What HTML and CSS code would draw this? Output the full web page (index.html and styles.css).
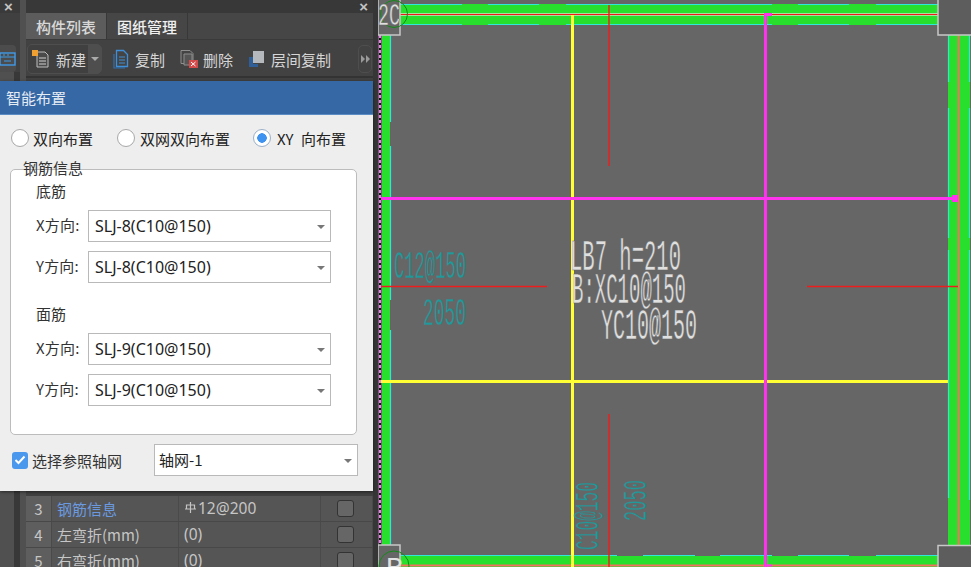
FILE: index.html
```html
<!DOCTYPE html>
<html lang="zh">
<head>
<meta charset="utf-8">
<title>智能布置</title>
<link rel="stylesheet" href="styles.css">
</head>
<body>
<div class="app">
  <div class="panel">
    <div class="side">
      <div class="strip strip-side"><span class="close">×</span></div>
      <div class="side-gap"></div>
      <div class="side-btn">
        <svg width="16" height="14" viewBox="0 0 16 14"><rect x="0" y="1" width="15" height="12" fill="none" stroke="#3f9be8" stroke-width="1.4"/><path d="M0 5h15M3 3h2M7 3h2M4 9h7" stroke="#3f9be8" stroke-width="1.2" fill="none"/></svg>
      </div>
      <div class="side-rest"></div>
    </div>
    <div class="main">
      <div class="strip strip-main"><span class="close">×</span></div>
      <div class="tabs">
        <div class="tab tab-active">构件列表</div>
        <div class="tab">图纸管理</div>
      </div>
      <div class="toolbar">
        <div class="tool-new">
          <span class="tool-new-main">
            <svg width="20" height="20" viewBox="0 0 20 20"><path d="M6 3h8l3 3v12H6z" fill="#4a4a4a" stroke="#bdbdbd"/><path d="M8 9h7M8 12h7M8 15h7" stroke="#d0d0d0"/><rect x="1" y="1" width="6" height="6" fill="#f0a030"/></svg>
            新建
          </span>
          <span class="tool-caret"></span>
        </div>
        <div class="tool tool-copy">
          <svg width="17" height="20" viewBox="0 0 17 20"><path d="M1 5v14h11" fill="none" stroke="#2f6fb0" stroke-width="1.2"/><path d="M3.500 1.500h7l4 4v12h-11z" fill="#444" stroke="#3f8fd8" stroke-width="1.3"/><path d="M6 8h6M6 11h6M6 14h6" stroke="#3f8fd8"/></svg>
          复制
        </div>
        <div class="tool tool-del">
          <svg width="19" height="20" viewBox="0 0 19 20"><path d="M1 1.500h9l3 3v10H1z" fill="#444" stroke="#8e8e8e"/><path d="M4 5h8v11H4z" fill="#555" stroke="#8e8e8e"/><rect x="9" y="11" width="9" height="8" fill="#d24a4a"/><path d="M11 13l4.500 4M15.500 13L11 17" stroke="#fff"/></svg>
          删除
        </div>
        <div class="tool tool-layer">
          <svg width="17" height="18" viewBox="0 0 17 18"><path d="M1 7h4v10H1z" fill="#2f5f96"/><path d="M1 17h9v-3H5V7H1z" fill="#2f5f96"/><rect x="5" y="1" width="11" height="12" fill="#b5b8bd"/></svg>
          层间复制
        </div>
        <div class="tool-more">
          <svg width="9" height="8" viewBox="0 0 9 8"><path d="M0 0l4 4-4 4zM5 0l4 4-4 4z" fill="#9a9a9a"/></svg>
        </div>
      </div>
      <div class="table-gap"></div>
      <div class="prop-table">
        <div class="prop-row">
          <span class="cell-num">3</span><span class="cell-name cell-link">钢筋信息</span>
          <span class="cell-val"><svg class="rebar" width="13" height="13" viewBox="0 0 13 13"><path d="M1 8h11M6.500 1v11M2.500 8V4h8v4" fill="none" stroke="#c4c4c4" stroke-width="1.200"/></svg>12@200</span>
          <span class="cell-chk"><i class="chk"></i></span>
        </div>
        <div class="prop-row">
          <span class="cell-num">4</span><span class="cell-name">左弯折(mm)</span>
          <span class="cell-val">(0)</span>
          <span class="cell-chk"><i class="chk"></i></span>
        </div>
        <div class="prop-row">
          <span class="cell-num">5</span><span class="cell-name">右弯折(mm)</span>
          <span class="cell-val">(0)</span>
          <span class="cell-chk"><i class="chk"></i></span>
        </div>
      </div>
    </div>
  </div>

  <svg class="canvas" width="593" height="567" viewBox="378 0 593 567">
    <rect x="378" y="0" width="593" height="567" fill="#666"/>
    <!-- beams -->
    <rect x="382" y="4" width="589" height="21" fill="#29df2d"/>
    <rect x="381" y="556" width="590" height="11" fill="#29df2d"/>
    <rect x="382" y="0" width="8" height="567" fill="#29df2d"/>
    <rect x="948" y="0" width="22" height="567" fill="#29df2d"/>
    <g class="dash-h" stroke="#2ee8d8">
      <path d="M400 4.500H462M488 4.500H539M566 4.500H772M798 4.500H849M876 4.500H938"/>
      <path d="M400 24.500H462M488 24.500H539M566 24.500H772M798 24.500H849M876 24.500H938"/>
      <path d="M400 555.500H617M643 555.500H695M720 555.500H772M798 555.500H849M876 555.500H938"/>
      <path d="M390.500 35V122M390.500 146V300M390.500 330V545"/>
      <path d="M948.500 35V82M948.500 108V238M948.500 250V470M948.500 420V498"/>
      <path d="M969.500 35V82M969.500 108V238M969.500 250V500"/>
    </g>
    <path d="M378 14.500H971" stroke="#a8e0a0" stroke-width="3"/>
    <path d="M378 14.500H971" stroke="#f01818"/>
    <path d="M958.500 35V567" stroke="#f47060" stroke-width="2"/>
    <path d="M380 565.500H971" stroke="#f47060" stroke-width="2"/>
    <!-- layout lines -->
    <path d="M381 381.500H948" stroke="#ffff33" stroke-width="3"/>
    <path d="M572.500 15V567" stroke="#ffff33" stroke-width="3"/>
    <path d="M380 198.500H958" stroke="#ff33ee" stroke-width="3"/>
    <path d="M765.500 14V567" stroke="#ff33ee" stroke-width="3"/>
    <rect x="952" y="195" width="6" height="7" fill="#ff33ee"/>
    <rect x="764" y="13" width="8" height="3" fill="#ff33ee"/>
    <path d="M765 565.500H772" stroke="#ff33ee" stroke-width="2"/>
    <!-- bars -->
    <path d="M609 5V166M609 414V567M380 286.500H547M807 286.500H958" stroke="#ee1c1c" stroke-width="1.400"/>
    <!-- left dashed edge -->
    <path d="M380 0V545" stroke="#1a0c1a" stroke-width="2"/>
    <path d="M380 0V545" stroke="#f07cf0" stroke-width="2" stroke-dasharray="3 2"/>
    <!-- corner boxes -->
    <rect x="378" y="-2" width="22" height="37" fill="#666" stroke="#c8c8c8" stroke-width="1.500"/>
    <rect x="938" y="-2" width="40" height="37" fill="#5d5d5d" stroke="#c8c8c8" stroke-width="1.500"/>
    <rect x="378" y="545" width="22" height="30" fill="#666" stroke="#c8c8c8" stroke-width="1.500"/>
    <rect x="938" y="545.500" width="40" height="30" fill="#5d5d5d" stroke="#c8c8c8" stroke-width="1.500"/>
    <circle cx="394" cy="14" r="13.500" fill="none" stroke="#138a18"/>
    <circle cx="394" cy="566" r="15" fill="none" stroke="#138a18"/>
    <text class="cad cad-corner cad-white" x="378" y="25" textLength="22" lengthAdjust="spacingAndGlyphs">2C</text>
    <text class="cad-small cad-white" x="386" y="576">R</text>
    <!-- annotations -->
    <text class="cad cad-white" x="570" y="270" textLength="111" lengthAdjust="spacingAndGlyphs">LB7 h=210</text>
    <text class="cad cad-white" x="572" y="303" textLength="114" lengthAdjust="spacingAndGlyphs">B:XC10@150</text>
    <text class="cad cad-white" x="601" y="339" textLength="96" lengthAdjust="spacingAndGlyphs">YC10@150</text>
    <text class="cad cad-teal cad-note" x="394" y="278" textLength="72" lengthAdjust="spacingAndGlyphs">C12@150</text>
    <text class="cad cad-teal cad-note" x="423" y="325" textLength="43" lengthAdjust="spacingAndGlyphs">2050</text>
    <text class="cad cad-teal cad-side" transform="translate(598 550) rotate(-90)" textLength="68" lengthAdjust="spacingAndGlyphs">C10@150</text>
    <text class="cad cad-teal cad-side" transform="translate(646 521) rotate(-90)" textLength="41" lengthAdjust="spacingAndGlyphs">2050</text>
  </svg>

  <div class="dialog">
    <div class="dialog-title">智能布置</div>
    <div class="radios">
      <label class="radio radio-a"><i class="radio-dot"></i>双向布置</label>
      <label class="radio radio-b"><i class="radio-dot"></i>双网双向布置</label>
      <label class="radio radio-c"><i class="radio-dot radio-on"></i>XY 向布置</label>
    </div>
    <div class="group">
      <span class="legend">钢筋信息</span>
      <div class="group-head">底筋</div>
      <div class="field">
        <span class="field-label">X方向:</span>
        <div class="select select-wide">SLJ-8(C10@150)<i class="caret"></i></div>
      </div>
      <div class="field">
        <span class="field-label">Y方向:</span>
        <div class="select select-wide">SLJ-8(C10@150)<i class="caret"></i></div>
      </div>
      <div class="group-head group-head-2">面筋</div>
      <div class="field">
        <span class="field-label">X方向:</span>
        <div class="select select-wide">SLJ-9(C10@150)<i class="caret"></i></div>
      </div>
      <div class="field">
        <span class="field-label">Y方向:</span>
        <div class="select select-wide">SLJ-9(C10@150)<i class="caret"></i></div>
      </div>
    </div>
    <div class="foot">
      <span class="check">
        <svg width="12" height="10" viewBox="0 0 12 10"><path d="M1.500 5l3 3 6-6.500" fill="none" stroke="#fff" stroke-width="2"/></svg>
      </span>
      <span class="check-label">选择参照轴网</span>
      <div class="select select-axis">轴网-1<i class="caret"></i></div>
    </div>
  </div>
</div>
</body>
</html>
```

FILE: styles.css
```css
* { box-sizing: border-box; }
html, body { margin: 0; padding: 0; height: 100%; overflow: hidden; }
body {
  font-family: "Noto Sans CJK SC", "Noto Sans", sans-serif;
  font-size: 15px;
  color: #333;
  background: #333;
}
.app { position: relative; display: flex; width: 971px; height: 567px; overflow: hidden; }

/* left dock */
.panel { display: flex; flex: 0 0 378px; height: 567px; background: #363636; overflow: hidden; }
.side { flex: 0 0 26px; background: #404040; border-right: 6px solid #505050; display: flex; flex-direction: column; }
.side > *, .main > * { flex: none; }
.strip { height: 13px; background: #3a3a3a; display: flex; justify-content: flex-end; align-items: center; }
.strip-side { justify-content: flex-start; padding-left: 4px; }
.close { font-size: 15px; line-height: 13px; color: #c4c4c4; font-family: "Liberation Sans", sans-serif; font-weight: 700; padding-right: 5px; }
.side-gap { height: 32px; }
.side-btn { width: 16px; height: 27px; background: #4c4c4c; border-radius: 0 4px 4px 0; display: flex; align-items: center; justify-content: flex-start; overflow: hidden; }
.side .side-rest { flex: 1; margin-top: 0; background: #505050; border-right: 6px solid #383838; }
.main { flex: 0 0 347px; background: #414141; display: flex; flex-direction: column; }
.strip-main { background: #383838; }
.tabs { display: flex; height: 27px; background: #464646; border-bottom: 1px solid #3a3a3a; }
.tab { width: 81px; padding-top: 1px; display: flex; align-items: center; justify-content: center; color: #f0f0f0; font-size: 15px; font-weight: 500; border-right: 1px solid #383838; }
.tab-active { background: #5c5c5c; color: #d8d8d8; }
.toolbar { display: flex; align-items: center; height: 38px; padding: 2px 0 0 1px; background: #424242; border-bottom: 2px solid #333; }
.tool-new { display: flex; flex: none; width: 75px; height: 30px; border-radius: 5px; border: 1px solid #4e4e4e; background: #4e4e4e; overflow: hidden; }
.tool-new-main { display: flex; align-items: center; gap: 5px; flex: 1; background: #404040; color: #d6d6d6; padding-left: 3px; white-space: nowrap; }
.tool-caret { flex: 0 0 13px; position: relative; }
.tool-caret::after { content: ""; position: absolute; left: 3px; top: 12px; border: 4px solid transparent; border-top-color: #aaa; }
.tool { display: flex; flex: none; align-items: center; color: #d6d6d6; white-space: nowrap; }
.tool-copy { margin-left: 11px; gap: 5px; }
.tool-del { margin-left: 15px; gap: 4px; }
.tool-layer { margin-left: 15px; gap: 6px; }
.tool-more { flex: none; margin-left: 27px; width: 14px; height: 28px; border: 1px solid #4e4e4e; border-radius: 5px; display: flex; align-items: center; justify-content: center; }
.table-gap { height: 418px; }
.prop-table { background: #555; }
.prop-row { display: grid; grid-template-columns: 26px 127px 142px 52px; height: 26px; border-bottom: 1px solid #484848; color: #c6c6c6; font-size: 15px; line-height: 25px; }
.prop-row > span { border-right: 1px solid #4a4a4a; }
.cell-num { background: #5e5e5e; text-align: center; }
.cell-name { padding-left: 5px; white-space: nowrap; }
.cell-link { color: #6b9ae0; }
.cell-val { padding-left: 5px; font-family: "Noto Sans", sans-serif; font-size: 15.5px; }
.rebar { vertical-align: 0; margin-right: 1px; }
.cell-chk { display: flex; align-items: center; padding-left: 16px; }
.chk { width: 17px; height: 17px; background: #666; border: 1px solid #333; border-radius: 3px; }

/* drawing */
.canvas { display: block; flex: 0 0 593px; }
.dash-h path { fill: none; stroke-width: 1.200; }
.cad { font-family: "Liberation Mono", monospace; font-size: 44px; stroke: #666; stroke-width: .5px; }
.cad-corner { font-size: 32px; }
.cad-note { font-size: 38px; }
.cad-side { font-size: 34px; }
.cad-small { font-family: "Liberation Mono", monospace; font-size: 28px; }
.cad-white { fill: #e0e0e0; }
.cad-teal { fill: #1f9a9c; }

/* dialog */
.dialog { position: absolute; left: 0; top: 81px; width: 373px; height: 410px; background: #eee; box-shadow: 0 1px 3px rgba(0, 0, 0, .5); }
.dialog-title { height: 34px; padding: 0 0 1px 6px; background: #3668a5; border-bottom: 1px solid #5c8cc4; color: #e6ecf4; font-size: 15px; display: flex; align-items: center; }
.radios { display: flex; align-items: center; height: 20px; margin-top: 13px; padding-left: 11px; }
.radio { display: flex; align-items: center; gap: 4px; color: #222; font-size: 15px; white-space: nowrap; }
.radio-a { width: 106px; }
.radio-b { width: 136px; gap: 5px; }
.radio-c { gap: 6px; word-spacing: 4px; }
.radio-dot { flex: none; width: 18px; height: 18px; background: #fff; border: 1.500px solid #a8a8a8; border-radius: 50%; display: block; }
.radio-on { border-color: #9ab0c8; background: radial-gradient(circle, #3f93f0 0 4.500px, #fff 5px); }
.group { position: relative; width: 347px; height: 266px; margin: 21px 0 0 10px; padding: 11px 0 0 25px; background: #fff; border: 1px solid #bcbcbc; border-radius: 5px; }
.legend { position: absolute; left: 12px; top: -12px; font-size: 15px; line-height: 20px; color: #333; }
.group-head { height: 20px; line-height: 20px; color: #333; }
.group-head-2 { margin-top: 21px; }
.field { display: flex; align-items: center; height: 32px; margin-top: 9px; }
.group-head + .field { margin-top: 9px; }
.field-label { width: 52px; margin-top: -4px; color: #333; font-size: 15px; letter-spacing: .2px; white-space: nowrap; }
.select { position: relative; height: 32px; line-height: 31px; padding-left: 6px; background: #fff; border: 1px solid #b9b9b9; color: #222; font-family: "Noto Sans", "Noto Sans CJK SC", sans-serif; font-size: 16px; white-space: nowrap; }
.select-wide { width: 243px; }
.select-axis { width: 204px; margin-left: 14px; font-family: "Noto Sans CJK SC", sans-serif; font-size: 15px; line-height: 29px; padding-left: 4px; }
.caret { position: absolute; right: 5px; top: 14px; border: 4px solid transparent; border-top-color: #777; border-bottom: 0; }
.foot { display: flex; align-items: center; height: 32px; margin-top: 9px; padding-left: 12px; }
.check { flex: none; width: 16px; height: 17px; background: #4a97ee; border-radius: 3px; display: flex; align-items: center; justify-content: center; }
.check-label { flex: none; margin-left: 4px; width: 108px; color: #333; white-space: nowrap; }
```
